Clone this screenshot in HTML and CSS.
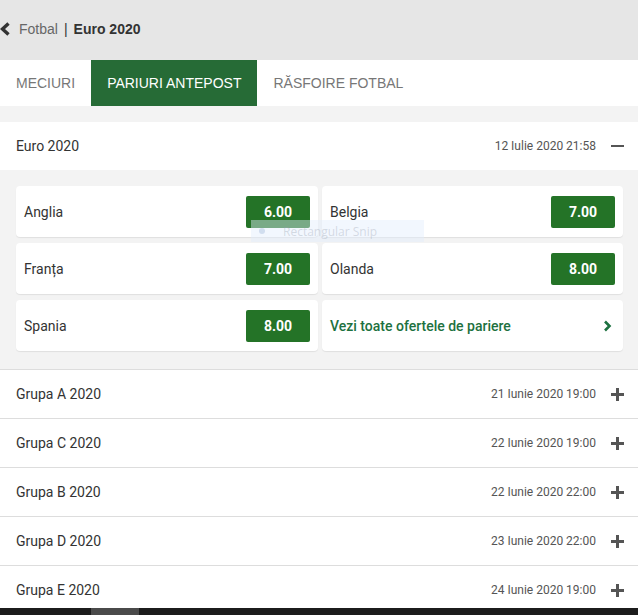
FILE: index.html
```html
<!DOCTYPE html>
<html lang="ro">
<head>
<meta charset="utf-8">
<link rel="stylesheet" href="styles.css">
</head>
<body>
<div class="page">
  <header class="crumbs">
    <svg class="back" width="11" height="14" viewBox="0 0 11 14"><polyline points="8.5,1.5 2.5,7 8.5,12.5" fill="none" stroke="#333" stroke-width="3.4"/></svg>
    <span class="crumb-link">Fotbal</span>
    <span class="crumb-sep">|</span>
    <span class="crumb-cur">Euro 2020</span>
  </header>
  <nav class="tabs">
    <span class="tab">MECIURI</span>
    <span class="tab active">PARIURI ANTEPOST</span>
    <span class="tab">RĂSFOIRE FOTBAL</span>
  </nav>
  <div class="spacer"></div>
  <section class="group open">
    <div class="group-head">
      <span class="g-title">Euro 2020</span>
      <span class="g-date">12 Iulie 2020 21:58</span>
      <span class="icon minus"></span>
    </div>
    <div class="cards">
      <div class="card"><span class="c-name">Anglia</span><span class="odd">6.00</span></div>
      <div class="card"><span class="c-name">Belgia</span><span class="odd">7.00</span></div>
      <div class="card"><span class="c-name">Franța</span><span class="odd">7.00</span></div>
      <div class="card"><span class="c-name">Olanda</span><span class="odd">8.00</span></div>
      <div class="card"><span class="c-name">Spania</span><span class="odd">8.00</span></div>
      <div class="card link"><span class="c-link">Vezi toate ofertele de pariere</span>
        <svg width="9" height="12" viewBox="0 0 9 12"><polyline points="2,1.5 6.5,6 2,10.5" fill="none" stroke="#1d7140" stroke-width="2.6"/></svg>
      </div>
    </div>
  </section>
  <section class="group"><div class="group-head"><span class="g-title">Grupa A 2020</span><span class="g-date">21 Iunie 2020 19:00</span><span class="icon plus"></span></div></section>
  <section class="group"><div class="group-head"><span class="g-title">Grupa C 2020</span><span class="g-date">22 Iunie 2020 19:00</span><span class="icon plus"></span></div></section>
  <section class="group"><div class="group-head"><span class="g-title">Grupa B 2020</span><span class="g-date">22 Iunie 2020 22:00</span><span class="icon plus"></span></div></section>
  <section class="group"><div class="group-head"><span class="g-title">Grupa D 2020</span><span class="g-date">23 Iunie 2020 22:00</span><span class="icon plus"></span></div></section>
  <section class="group"><div class="group-head"><span class="g-title">Grupa E 2020</span><span class="g-date">24 Iunie 2020 19:00</span><span class="icon plus"></span></div></section>
</div>
<div class="snip"><span class="snip-dot"></span><span class="snip-text">Rectangular Snip</span></div>
<div class="bottom-bar"><span class="bb-active"></span></div>
</body>
</html>
```

FILE: styles.css
```css
html, body {
  margin: 0;
  padding: 0;
  height: 100%;
  overflow: hidden;
}
body {
  font-family: Roboto, "Liberation Sans", Arial, sans-serif;
  background: #f3f3f3;
  color: #333;
  font-size: 14px;
}
.crumbs {
  height: 60px;
  background: #e6e6e6;
  display: flex;
  align-items: center;
  box-sizing: border-box;
  padding-bottom: 2px;
  font-family: "Liberation Sans", Arial, sans-serif;
}
.back { margin-left: 0; margin-right: 8px; }
.crumb-link { color: #666; font-size: 14px; }
.crumb-sep { color: #333; margin: 0 6px 0 6px; font-size: 14px; }
.crumb-cur { color: #333; font-weight: 700; font-size: 14px; }
.tabs {
  display: flex;
  height: 46px;
  background: #fff;
  font-family: "Liberation Sans", Arial, sans-serif;
}
.tab {
  display: flex;
  align-items: center;
  padding: 0 16px;
  color: #777;
  font-size: 14px;
}
.tab.active {
  background: #266b36;
  color: #fff;
}
.spacer { height: 16px; }
.group {
  background: #fff;
  border-bottom: 1px solid #dddddd;
}
.group-head {
  height: 48px;
  display: flex;
  align-items: center;
  padding: 0 14px 0 16px;
}
.g-title { flex: 1; color: #333; font-size: 14px; }
.g-date { color: #555; font-size: 12px; margin-right: 15px; }
.icon { position: relative; width: 13px; height: 13px; display: inline-block; }
.icon::before {
  content: "";
  position: absolute;
  left: 0; right: 0; top: 5px; height: 3px;
  background: #555;
}
.plus::after {
  content: "";
  position: absolute;
  top: 0; bottom: 0; left: 5px; width: 3px;
  background: #555;
}
.minus::before { top: 5px; height: 2.5px; }
.cards {
  background: #f3f3f3;
  display: grid;
  grid-template-columns: 302px 301px;
  column-gap: 4px;
  row-gap: 6px;
  padding: 16px 15px 18px 16px;
}
.card {
  background: #fff;
  border-radius: 4px;
  height: 51px;
  display: flex;
  align-items: center;
  padding: 0 8px;
  box-shadow: 0 1px 1px rgba(0,0,0,0.08);
}
.c-name { flex: 1; font-size: 14px; color: #333; padding-top: 1px; }
.odd {
  width: 64px;
  height: 32px;
  background: #247327;
  color: #fff;
  font-weight: 700;
  font-size: 14px;
  border-radius: 2px;
  display: flex;
  align-items: center;
  justify-content: center;
}
.c-link { flex: 1; color: #1d7140; font-weight: 500; font-size: 14px; }
.card.link svg { margin-right: 3px; }
.snip {
  position: absolute;
  left: 251px;
  top: 220px;
  width: 173px;
  height: 22px;
  background: rgba(226, 238, 252, 0.45);
  display: flex;
  align-items: center;
}
.snip-dot {
  width: 6px; height: 6px; border-radius: 50%;
  background: rgba(200, 215, 235, 0.8);
  margin-left: 8px; margin-right: 18px;
}
.snip-text { color: rgba(150, 160, 175, 0.35); font-family: "Open Sans", sans-serif; font-size: 12px; }
.bottom-bar {
  position: fixed;
  left: 0; right: 0; bottom: 0;
  height: 7px;
  background: #1c1c1c;
}
.bb-active {
  position: absolute;
  left: 91px;
  width: 48px;
  top: 0; bottom: 0;
  background: #4a4a4a;
}
```
